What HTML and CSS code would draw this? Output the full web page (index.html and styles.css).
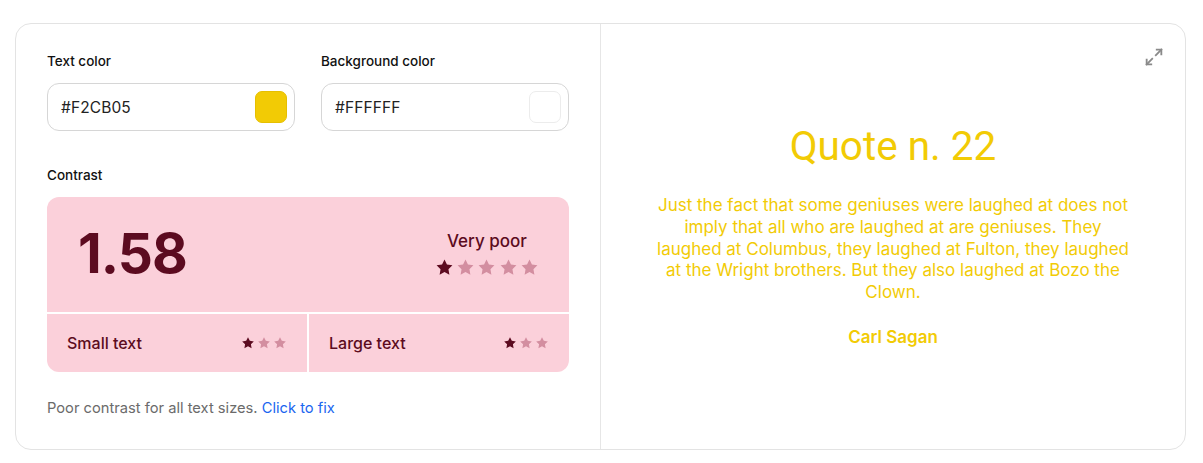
FILE: index.html
```html
<!DOCTYPE html>
<html lang="en">
<head>
<meta charset="utf-8">
<title>Contrast checker</title>
<link rel="stylesheet" href="styles.css">
</head>
<body>
<div class="page">
  <div class="card">
    <section class="controls">
      <div class="pickers">
        <div class="field">
          <label class="label">Text color</label>
          <div class="input">
            <span class="hex">#F2CB05</span>
            <span class="swatch swatch-yellow"></span>
          </div>
        </div>
        <div class="field">
          <label class="label">Background color</label>
          <div class="input">
            <span class="hex">#FFFFFF</span>
            <span class="swatch swatch-white"></span>
          </div>
        </div>
      </div>
      <div class="label contrast-label">Contrast</div>
      <div class="contrast">
        <div class="cell main">
          <div class="ratio">1.58</div>
          <div class="rating">
            <div class="rating-text">Very poor</div>
            <div class="stars big">
              <svg viewBox="0 0 24 24" class="on"><path d="M12 2l3.09 6.26L22 9.27l-5 4.87 1.18 6.88L12 17.77l-6.18 3.25L7 14.14 2 9.27l6.91-1.01L12 2z"/></svg>
              <svg viewBox="0 0 24 24"><path d="M12 2l3.09 6.26L22 9.27l-5 4.87 1.18 6.88L12 17.77l-6.18 3.25L7 14.14 2 9.27l6.91-1.01L12 2z"/></svg>
              <svg viewBox="0 0 24 24"><path d="M12 2l3.09 6.26L22 9.27l-5 4.87 1.18 6.88L12 17.77l-6.18 3.25L7 14.14 2 9.27l6.91-1.01L12 2z"/></svg>
              <svg viewBox="0 0 24 24"><path d="M12 2l3.09 6.26L22 9.27l-5 4.87 1.18 6.88L12 17.77l-6.18 3.25L7 14.14 2 9.27l6.91-1.01L12 2z"/></svg>
              <svg viewBox="0 0 24 24"><path d="M12 2l3.09 6.26L22 9.27l-5 4.87 1.18 6.88L12 17.77l-6.18 3.25L7 14.14 2 9.27l6.91-1.01L12 2z"/></svg>
            </div>
          </div>
        </div>
        <div class="cell sub">
          <span class="sub-label">Small text</span>
          <div class="stars small">
            <svg viewBox="0 0 24 24" class="on"><path d="M12 2l3.09 6.26L22 9.27l-5 4.87 1.18 6.88L12 17.77l-6.18 3.25L7 14.14 2 9.27l6.91-1.01L12 2z"/></svg>
            <svg viewBox="0 0 24 24"><path d="M12 2l3.09 6.26L22 9.27l-5 4.87 1.18 6.88L12 17.77l-6.18 3.25L7 14.14 2 9.27l6.91-1.01L12 2z"/></svg>
            <svg viewBox="0 0 24 24"><path d="M12 2l3.09 6.26L22 9.27l-5 4.87 1.18 6.88L12 17.77l-6.18 3.25L7 14.14 2 9.27l6.91-1.01L12 2z"/></svg>
          </div>
        </div>
        <div class="cell sub">
          <span class="sub-label">Large text</span>
          <div class="stars small">
            <svg viewBox="0 0 24 24" class="on"><path d="M12 2l3.09 6.26L22 9.27l-5 4.87 1.18 6.88L12 17.77l-6.18 3.25L7 14.14 2 9.27l6.91-1.01L12 2z"/></svg>
            <svg viewBox="0 0 24 24"><path d="M12 2l3.09 6.26L22 9.27l-5 4.87 1.18 6.88L12 17.77l-6.18 3.25L7 14.14 2 9.27l6.91-1.01L12 2z"/></svg>
            <svg viewBox="0 0 24 24"><path d="M12 2l3.09 6.26L22 9.27l-5 4.87 1.18 6.88L12 17.77l-6.18 3.25L7 14.14 2 9.27l6.91-1.01L12 2z"/></svg>
          </div>
        </div>
      </div>
      <p class="note">Poor contrast for all text sizes. <a href="#" class="fix">Click to fix</a></p>
    </section>
    <section class="preview">
      <button class="expand" aria-label="Expand">
        <svg viewBox="0 0 24 24" fill="none" stroke="currentColor" stroke-width="2" stroke-linecap="square">
          <polyline points="15 4 20 4 20 9"/>
          <line x1="20" y1="4" x2="14" y2="10"/>
          <polyline points="9 20 4 20 4 15"/>
          <line x1="4" y1="20" x2="10" y2="14"/>
        </svg>
      </button>
      <h2 class="title">Quote n. 22</h2>
      <p class="quote">Just the fact that some geniuses were laughed at does not imply that all who are laughed at are geniuses. They laughed at Columbus, they laughed at Fulton, they laughed at the Wright brothers. But they also laughed at Bozo the Clown.</p>
      <p class="author">Carl Sagan</p>
    </section>
  </div>
</div>
</body>
</html>
```

FILE: styles.css
```css
* { box-sizing: border-box; }
html, body { margin: 0; background: #fff; }
body {
  font-family: Inter, "Noto Sans", sans-serif;
  color: #111;
}
.page { padding: 23px 17px 14px 15px; }
.card {
  display: grid;
  grid-template-columns: 585px 1fr;
  height: 427px;
  border: 1px solid #e3e3e3;
  border-radius: 16px;
}
.controls {
  padding: 27px 31px 0 31px;
  border-right: 1px solid #e6e6e6;
}
.pickers {
  display: grid;
  grid-template-columns: 248px 248px;
  justify-content: space-between;
}
.field { display: flex; flex-direction: column; gap: 12px; }
.label {
  font-size: 13.5px;
  line-height: 20px;
  font-weight: 500;
  color: #111;
}
.input {
  height: 48px;
  border: 1px solid #d6d6d6;
  border-radius: 12px;
  display: flex;
  align-items: center;
  justify-content: space-between;
  padding: 0 7px 0 13px;
}
.hex { font-size: 15.5px; color: #222; letter-spacing: 0.1px; }
.swatch {
  width: 32px;
  height: 32px;
  border-radius: 7px;
}
.swatch-yellow { background: #F2CB05; border: 1px solid #e6bf00; }
.swatch-white { background: #fff; border: 1px solid #ececec; }
.contrast-label { margin-top: 34px; }
.contrast {
  margin-top: 12px;
  width: 522px;
  display: grid;
  grid-template-columns: 1fr 1fr;
  grid-template-rows: 115px 58px;
  gap: 2px;
  border-radius: 12px;
  overflow: hidden;
  background: #fff;
}
.cell { background: #fbd0da; color: #5c0b20; }
.main {
  grid-column: 1 / 3;
  display: flex;
  align-items: center;
  justify-content: space-between;
  padding: 0 30px 0 31px;
}
.ratio {
  font-size: 55px;
  font-weight: 700;
  letter-spacing: -1px;
  line-height: 1;
  margin-top: -2px;
}
.rating {
  display: flex;
  flex-direction: column;
  align-items: center;
  gap: 6px;
  margin-top: -3px;
}
.rating-text { font-size: 17px; font-weight: 500; line-height: 22px; }
.stars { display: flex; }
.stars svg { fill: #d38ea0; }
.stars svg.on { fill: #5c0b20; }
.stars.big { gap: 2.3px; }
.stars.big svg { width: 19px; height: 19px; }
.stars.small { gap: 2px; }
.stars.small svg { width: 14px; height: 14px; }
.sub {
  display: flex;
  align-items: center;
  justify-content: space-between;
  padding: 0 20px 0 20px;
}
.sub-label { font-size: 16px; font-weight: 500; }
.note {
  margin: 26px 0 0;
  font-size: 14.7px;
  line-height: 20px;
  color: #6b6b6b;
}
.fix { color: #1a66f0; text-decoration: none; }
.preview {
  position: relative;
  display: flex;
  flex-direction: column;
  align-items: center;
  justify-content: center;
  text-align: center;
  color: #F2CB05;
  padding: 0 40px 2px;
}
.expand {
  position: absolute;
  top: 22px;
  right: 20px;
  width: 22px;
  height: 22px;
  padding: 0;
  border: 0;
  background: none;
  color: #8a8a8a;
}
.expand svg { width: 22px; height: 22px; display: block; }
.title {
  margin: 0;
  font-size: 40.5px;
  line-height: 46px;
  font-weight: 400;
  font-family: Roboto, Inter, sans-serif;
}
.quote {
  margin: 26px 0 0;
  max-width: 476px;
  font-size: 17px;
  line-height: 21.8px;
}
.author {
  margin: 22px 0 0;
  font-size: 17px;
  line-height: 22px;
  font-weight: 600;
}
```
